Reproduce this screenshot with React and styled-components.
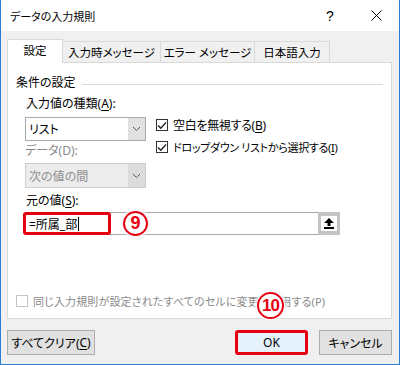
import React from 'react'
import styled, { createGlobalStyle } from 'styled-components'

const GlobalStyle = createGlobalStyle`
  html, body { margin: 0; padding: 0; background: #fff; }
  body {
    font-family: "Noto Sans", "Noto Sans CJK JP", sans-serif;
    font-size: 12px;
    font-feature-settings: "palt";
    color: #000;
  }
  * { box-sizing: border-box; }
  u { text-underline-offset: 2px; }
`

const Window = styled.div`
  width: 400px;
  height: 365px;
  display: flex;
  flex-direction: column;
  border: 1px solid #2a7fd4;
  border-top: none;
  background: #f0f0f0;
`

const TitleBar = styled.div`
  height: 31px;
  flex: none;
  display: flex;
  align-items: center;
  background: #fff;
  padding-left: 9px;
`

const Title = styled.span`
  font-size: 11px;
  flex: 1;
`

const TitleButton = styled.div`
  width: 46px;
  height: 31px;
  display: flex;
  align-items: center;
  justify-content: center;
  font-family: "Liberation Sans", sans-serif;
  font-size: 14px;
`

const Body = styled.div`
  flex: 1;
  padding: 8px 7px 0 6px;
  display: flex;
  flex-direction: column;
`

const Tabs = styled.div`
  display: flex;
  align-items: flex-end;
  height: 23px;
  position: relative;
  z-index: 2;
`

const Tab = styled.div`
  width: ${p => p.$w}px;
  height: ${p => (p.$active ? 24 : 21)}px;
  margin-left: ${p => (p.$first ? 0 : -1)}px;
  margin-bottom: ${p => (p.$active ? -1 : 0)}px;
  border: 1px solid #d9d9d9;
  border-bottom: none;
  background: ${p => (p.$active ? '#fff' : '#f0f0f0')};
  display: flex;
  align-items: center;
  justify-content: center;
  padding-bottom: ${p => (p.$active ? 3 : 0)}px;
  font-size: 11.5px;
  white-space: pre;
`

const Panel = styled.div`
  height: 257px;
  background: #fff;
  border: 1px solid #d9d9d9;
  padding: 12px 8px 0 8px;
  display: flex;
  flex-direction: column;
  position: relative;
`

const Legend = styled.div`
  height: 16px;
  line-height: 16px;
  display: flex;
  align-items: center;
  &::after {
    content: "";
    flex: 1;
    height: 1px;
    background: #dcdcdc;
    margin-left: 6px;
    margin-top: 2px;
  }
`

const Group = styled.div`
  padding-left: 10px;
  display: flex;
  flex-direction: column;
`

const FieldLabel = styled.div`
  height: 16px;
  line-height: 16px;
  margin-top: ${p => p.$mt || 0}px;
  color: ${p => (p.$disabled ? '#8a8a8a' : '#000')};
  white-space: nowrap;
`

const Row = styled.div`
  display: flex;
  margin-top: 5px;
`

const LeftCol = styled.div`
  width: 121px;
  margin-left: -1px;
  display: flex;
  flex-direction: column;
`

const Select = styled.div`
  height: ${p => p.$h}px;
  margin-top: ${p => p.$mt || 0}px;
  display: flex;
  border: 1px solid ${p => (p.$disabled ? '#cccccc' : '#a8a8a8')};
  background: ${p => (p.$disabled ? '#ececec' : '#fff')};
  color: ${p => (p.$disabled ? '#8f8f8f' : '#000')};
`

const SelectText = styled.div`
  flex: 1;
  display: flex;
  align-items: center;
  padding-left: 3px;
`

const SelectButton = styled.div`
  width: 17px;
  background: ${p => (p.$disabled ? '#dcdcdc' : '#e1e1e1')};
  display: flex;
  align-items: center;
  justify-content: center;
`

const RightCol = styled.div`
  margin-left: 10px;
  display: flex;
  flex-direction: column;
  gap: 6px;
`

const CheckRow = styled.div`
  height: 16px;
  display: flex;
  align-items: center;
  gap: 5px;
  white-space: pre;
  font-size: ${p => p.$fs || 12}px;
  letter-spacing: ${p => p.$ls || 0}px;
  color: ${p => (p.$disabled ? '#8a8a8a' : '#000')};
  position: relative;
`

const Box = styled.div`
  width: 12px;
  height: 12px;
  border: 1px solid ${p => (p.$disabled ? '#c4c4c4' : '#333')};
  background: #fff;
  display: flex;
  align-items: center;
  justify-content: center;
  flex: none;
`

const InputWrap = styled.div`
  margin-top: 3px;
  margin-left: -1px;
  width: 315px;
  height: 23px;
  display: flex;
  position: relative;
`

const TextField = styled.div`
  flex: 1;
  border: 1px solid #a8a8a8;
  border-right: none;
  display: flex;
  align-items: center;
  padding-left: 3px;
`

const Caret = styled.span`
  display: inline-block;
  width: 1px;
  height: 14px;
  background: #000;
  margin-left: 1px;
`

const RefButton = styled.div`
  width: 22px;
  height: 23px;
  background: #c4c4c4;
  padding: 3px;
  display: flex;
  align-items: center;
  justify-content: center;
`

const RefInner = styled.div`
  width: 16px;
  height: 15px;
  background: #fff;
  display: flex;
  align-items: center;
  justify-content: center;
`

const Highlight = styled.div`
  position: absolute;
  left: -2px;
  top: 0;
  width: 88px;
  height: 23px;
  border: 3px solid #e60012;
  border-radius: 3px;
`

const Badge = styled.div`
  position: absolute;
  left: ${p => p.$x}px;
  top: ${p => p.$y}px;
  width: ${p => p.$d}px;
  height: ${p => p.$d}px;
  border-radius: 50%;
  background: #fff;
  box-shadow: 0 0 3px 2px rgba(255, 255, 255, 0.9), 0 0 4px rgba(0, 0, 0, 0.25);
  border: 2px solid #e60012;
  color: #e60012;
  font-family: "Liberation Sans", sans-serif;
  font-weight: bold;
  font-size: ${p => p.$fs}px;
  letter-spacing: ${p => p.$ls || 0}px;
  display: flex;
  align-items: center;
  justify-content: center;
  z-index: 3;
`

const BottomRow = styled.div`
  margin-top: auto;
  margin-bottom: 9px;
`

const Buttons = styled.div`
  display: flex;
  margin-top: 11px;
  align-items: flex-start;
`

const Button = styled.div`
  width: ${p => p.$w}px;
  height: 25px;
  margin-left: ${p => p.$ml || 0}px;
  border: ${p => (p.$hl ? '3px solid #e60012' : '1px solid #adadad')};
  border-radius: ${p => (p.$hl ? 3 : 0)}px;
  background: ${p => (p.$hl ? '#e5f1fb' : '#e1e1e1')};
  display: flex;
  align-items: center;
  justify-content: center;
  white-space: nowrap;
`

const Chevron = () => (
  <svg width="9" height="6" viewBox="0 0 9 6">
    <path d="M1 1 L4.5 4.5 L8 1" fill="none" stroke="#555" strokeWidth="1" />
  </svg>
)

const Check = () => (
  <svg width="10" height="9" viewBox="0 0 10 9">
    <path d="M1 4.5 L3.8 7.3 L9 1.5" fill="none" stroke="#222" strokeWidth="1.3" />
  </svg>
)

const UpArrow = () => (
  <svg width="10" height="11" viewBox="0 0 10 11">
    <path d="M5 0 L10 5 L6.5 5 L6.5 8 L3.5 8 L3.5 5 L0 5 Z" fill="#000" />
    <rect x="0" y="9" width="10" height="2" fill="#000" />
  </svg>
)

const CloseX = () => (
  <svg width="11" height="11" viewBox="0 0 11 11">
    <path d="M0.5 0.5 L10.5 10.5 M10.5 0.5 L0.5 10.5" stroke="#000" strokeWidth="1" />
  </svg>
)

export default function App() {
  return (
    <>
      <GlobalStyle />
      <Window>
        <TitleBar>
          <Title>データの入力規則</Title>
          <TitleButton>?</TitleButton>
          <TitleButton><CloseX /></TitleButton>
        </TitleBar>
        <Body>
          <Tabs>
            <Tab $w={56} $first $active>設定</Tab>
            <Tab $w={99}>入力時メッセージ</Tab>
            <Tab $w={95}>エラー メッセージ</Tab>
            <Tab $w={76}>日本語入力</Tab>
          </Tabs>
          <Panel>
            <Legend>条件の設定</Legend>
            <Group>
              <FieldLabel $mt={5}>入力値の種類(<u>A</u>):</FieldLabel>
              <Row>
                <LeftCol>
                  <Select $h={24}>
                    <SelectText>リスト</SelectText>
                    <SelectButton><Chevron /></SelectButton>
                  </Select>
                  <FieldLabel $mt={2} $disabled>データ(D):</FieldLabel>
                  <Select $h={25} $mt={4} $disabled>
                    <SelectText>次の値の間</SelectText>
                    <SelectButton $disabled><Chevron /></SelectButton>
                  </Select>
                </LeftCol>
                <RightCol>
                  <CheckRow $ls={-0.3}><Box><Check /></Box><span>空白を無視する(<u>B</u>)</span></CheckRow>
                  <CheckRow $fs={11} $ls={-0.3}><Box><Check /></Box><span>ドロップダウン リストから選択する(<u>I</u>)</span></CheckRow>
                </RightCol>
              </Row>
              <FieldLabel $mt={5}>元の値(<u>S</u>):</FieldLabel>
              <InputWrap>
                <TextField>=所属_部<Caret /></TextField>
                <RefButton><RefInner><UpArrow /></RefInner></RefButton>
                <Highlight />
                <Badge $x={98} $y={-1} $d={25} $fs={18}>9</Badge>
              </InputWrap>
            </Group>
            <BottomRow>
              <CheckRow $disabled $fs={11} $ls={0.15}>
                <Box $disabled />
                <span>同じ入力規則が設定されたすべてのセルに変更を適用する(P)</span>
                <Badge $x={241} $y={-1} $d={27} $fs={17} $ls={-1}>10</Badge>
              </CheckRow>
            </BottomRow>
          </Panel>
          <Buttons>
            <Button $w={88}>すべてクリア(<u>C</u>)</Button>
            <Button $w={73} $ml={140} $hl>OK</Button>
            <Button $w={73} $ml={11}>キャンセル</Button>
          </Buttons>
        </Body>
      </Window>
    </>
  )
}
